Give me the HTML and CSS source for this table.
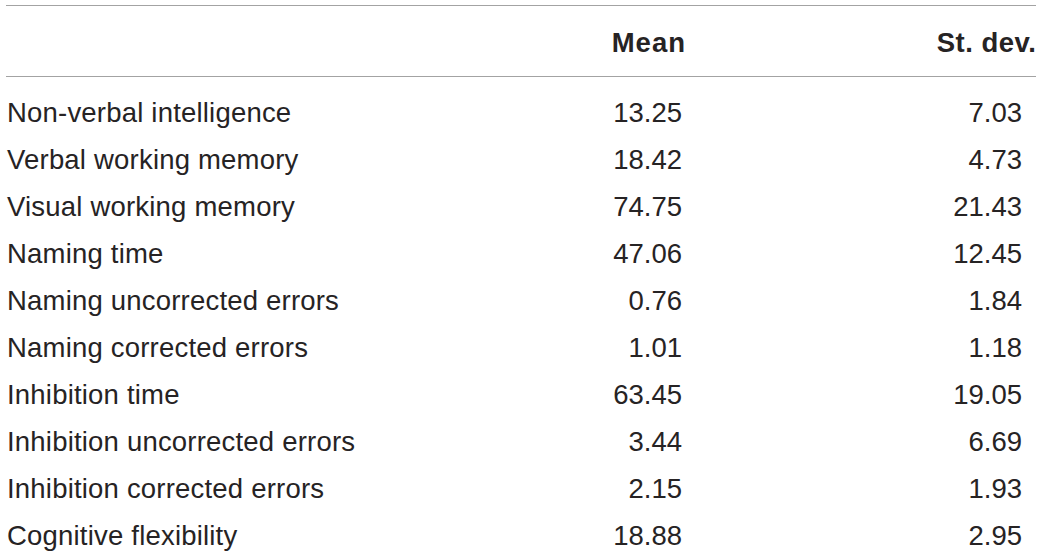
FILE: index.html
```html
<!DOCTYPE html>
<html lang="en">
<head>
<meta charset="utf-8">
<title>Descriptive statistics</title>
<link rel="stylesheet" href="styles.css">
</head>
<body>
<div class="wrap">
<table class="stats">
  <colgroup>
    <col class="c-label">
    <col class="c-mean">
    <col class="c-sd">
  </colgroup>
  <thead>
    <tr>
      <th class="label"></th>
      <th class="num mean"><span class="hd">Mean</span></th>
      <th class="num sd"><span class="hd hd-sd">St. dev.</span></th>
    </tr>
  </thead>
  <tbody>
    <tr><td class="label">Non-verbal intelligence</td><td class="num mean">13.25</td><td class="num sd">7.03</td></tr>
    <tr><td class="label">Verbal working memory</td><td class="num mean">18.42</td><td class="num sd">4.73</td></tr>
    <tr><td class="label">Visual working memory</td><td class="num mean">74.75</td><td class="num sd">21.43</td></tr>
    <tr><td class="label">Naming time</td><td class="num mean">47.06</td><td class="num sd">12.45</td></tr>
    <tr><td class="label">Naming uncorrected errors</td><td class="num mean">0.76</td><td class="num sd">1.84</td></tr>
    <tr><td class="label">Naming corrected errors</td><td class="num mean">1.01</td><td class="num sd">1.18</td></tr>
    <tr><td class="label">Inhibition time</td><td class="num mean">63.45</td><td class="num sd">19.05</td></tr>
    <tr><td class="label">Inhibition uncorrected errors</td><td class="num mean">3.44</td><td class="num sd">6.69</td></tr>
    <tr><td class="label">Inhibition corrected errors</td><td class="num mean">2.15</td><td class="num sd">1.93</td></tr>
    <tr><td class="label">Cognitive flexibility</td><td class="num mean">18.88</td><td class="num sd">2.95</td></tr>
  </tbody>
</table>
</div>
</body>
</html>
```
FILE: styles.css
```css
html, body {
  margin: 0;
  padding: 0;
  background: #ffffff;
}
body {
  font-family: "Liberation Sans", Arial, sans-serif;
  color: #262324;
  font-size: 27.5px;
}
.wrap {
  padding: 5px 0 0 6px;
}
.stats {
  width: 1030px;
  table-layout: fixed;
  border-collapse: collapse;
  border-top: 1px solid #a3a3a3;
}
.c-label { width: 429px; }
.c-mean { width: 250px; }
.c-sd { width: 351px; }
.stats thead tr {
  border-bottom: 1px solid #a3a3a3;
}
.stats th {
  height: 70px;
  padding: 3px 0 0 0;
  box-sizing: border-box;
  font-weight: bold;
  line-height: 67px;
  vertical-align: middle;
  white-space: nowrap;
}
.hd {
  letter-spacing: 1px;
  margin-right: -1px;
}
.hd-sd {
  letter-spacing: 0.5px;
  margin-right: -0.5px;
}
.stats td {
  height: 47px;
  line-height: 47px;
  padding: 0;
  box-sizing: border-box;
  vertical-align: middle;
  white-space: nowrap;
}
.stats tbody tr:first-child td {
  padding-top: 12px;
  height: 59px;
}
.stats .label {
  text-align: left;
  padding-left: 1px;
}
.stats td.label {
  letter-spacing: 0.2px;
}
.num {
  text-align: right;
}
.stats th.mean { padding-right: 0; }
.stats td.mean { padding-right: 3px; }
.stats th.sd { padding-right: 0; }
.stats td.sd { padding-right: 14px; }
```
